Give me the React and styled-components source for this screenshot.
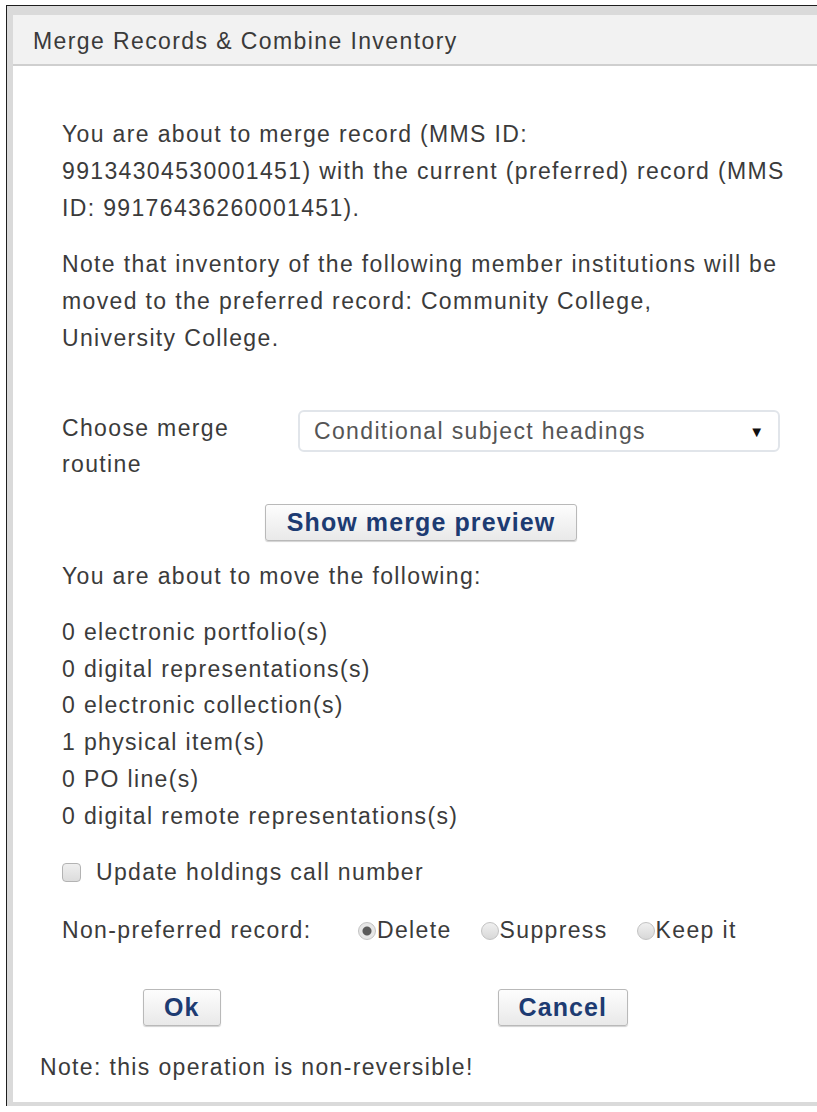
import React, { useState } from 'react';
import styled, { createGlobalStyle } from 'styled-components';

const GlobalStyle = createGlobalStyle`
  html, body {
    margin: 0;
    padding: 0;
    background: #ffffff;
  }
  body {
    font-family: "Liberation Sans", Arial, sans-serif;
    overflow: hidden;
  }
`;

const counts = [
  '0 electronic portfolio(s)',
  '0 digital representations(s)',
  '0 electronic collection(s)',
  '1 physical item(s)',
  '0 PO line(s)',
  '0 digital remote representations(s)',
];

const options = [
  { id: 'delete', label: 'Delete' },
  { id: 'suppress', label: 'Suppress' },
  { id: 'keep', label: 'Keep it' },
];

const App = () => {
  const [routine] = useState('Conditional subject headings');
  const [updateCallNumber, setUpdateCallNumber] = useState(false);
  const [nonPreferred, setNonPreferred] = useState('delete');

  return (
    <>
      <GlobalStyle />
      <Frame>
        <Header>Merge Records &amp; Combine Inventory</Header>
        <Body>
          <Para>
            You are about to merge record (MMS ID:
            <br />
            99134304530001451) with the current (preferred) record (MMS
            <br />
            ID: 99176436260001451).
          </Para>
          <Para $gap={19}>
            Note that inventory of the following member institutions will be
            <br />
            moved to the preferred record: Community College,
            <br />
            University College.
          </Para>

          <RoutineRow>
            <RoutineLabel>Choose merge routine</RoutineLabel>
            <SelectBox>
              <span>{routine}</span>
              <Arrow>▼</Arrow>
            </SelectBox>
          </RoutineRow>

          <PreviewRow>
            <Button $wide>Show merge preview</Button>
          </PreviewRow>

          <Para $gap={17}>You are about to move the following:</Para>
          <CountList>
            {counts.map((c) => (
              <li key={c}>{c}</li>
            ))}
          </CountList>

          <CheckRow onClick={() => setUpdateCallNumber((v) => !v)}>
            <Checkbox $checked={updateCallNumber} />
            Update holdings call number
          </CheckRow>

          <RadioRow>
            <RadioLabel>Non-preferred record:</RadioLabel>
            {options.map((o) => (
              <RadioOption key={o.id} onClick={() => setNonPreferred(o.id)}>
                <Radio $checked={nonPreferred === o.id} />
                {o.label}
              </RadioOption>
            ))}
          </RadioRow>

          <Actions>
            <Button>Ok</Button>
            <Button>Cancel</Button>
          </Actions>

          <Warning>Note: this operation is non-reversible!</Warning>
        </Body>
      </Frame>
    </>
  );
};

export default App;

const Frame = styled.div`
  margin: 5px 0 0 6px;
  border-top: 1px solid #1e1e1e;
  border-left: 1px solid #1e1e1e;
  background: #dadada;
  padding: 9px 0 4px 6px;
  height: 1101px;
  box-sizing: border-box;
  display: flex;
  flex-direction: column;
  color: #3b3b3b;
  font-size: 23px;
  letter-spacing: 1.35px;
`;

const Header = styled.div`
  height: 51px;
  flex-shrink: 0;
  display: flex;
  align-items: center;
  padding: 3px 0 0 20px;
  box-sizing: border-box;
  background: #f2f2f2;
  border-bottom: 2px solid #cfcfcf;
  color: #3a3a3a;
  letter-spacing: 1.4px;
`;

const Body = styled.div`
  flex: 1;
  background: #ffffff;
  padding: 50px 10px 0 49px;
  line-height: 37px;
`;

const Para = styled.p`
  margin: ${(p) => p.$gap || 0}px 0 0;
  white-space: nowrap;
`;

const RoutineRow = styled.div`
  display: flex;
  align-items: flex-start;
  margin-top: 53px;
  width: 718px;
`;

const RoutineLabel = styled.div`
  width: 236px;
  line-height: 36px;
`;

const SelectBox = styled.div`
  flex: 1;
  height: 42px;
  box-sizing: border-box;
  border: 2px solid #e1e5ea;
  border-radius: 6px;
  display: flex;
  align-items: center;
  justify-content: space-between;
  padding: 0 14px;
  color: #555555;
`;

const Arrow = styled.span`
  color: #111111;
  font-size: 15px;
  letter-spacing: 0;
`;

const PreviewRow = styled.div`
  display: flex;
  justify-content: center;
  width: 718px;
  margin-top: 22px;
`;

const Button = styled.button`
  font-family: "Liberation Sans", Arial, sans-serif;
  font-size: 25px;
  font-weight: bold;
  letter-spacing: 1.1px;
  color: #1d3b72;
  height: 37px;
  padding: 0 ${(p) => (p.$wide ? '21px' : '20px')};
  background: linear-gradient(#fdfdfd, #e9e9e9);
  border: 1px solid #b9b9b9;
  border-radius: 3px;
  box-shadow: 0 1px 1px rgba(0, 0, 0, 0.18);
  cursor: pointer;
  line-height: 1;
`;

const CountList = styled.ul`
  list-style: none;
  margin: 19px 0 0;
  padding: 0;
  line-height: 36.7px;
`;

const CheckRow = styled.label`
  display: flex;
  align-items: center;
  margin-top: 20px;
  cursor: pointer;
`;

const Checkbox = styled.span`
  width: 17px;
  height: 17px;
  border: 1px solid #b3b3b3;
  border-radius: 4px;
  background: ${(p) => (p.$checked ? '#9aa9c2' : 'linear-gradient(#efefef, #dcdcdc)')};
  margin-right: 15px;
  flex-shrink: 0;
`;

const RadioRow = styled.div`
  display: flex;
  align-items: center;
  margin-top: 21px;
`;

const RadioLabel = styled.span`
  width: 296px;
`;

const RadioOption = styled.label`
  display: flex;
  align-items: center;
  margin-right: 29px;
  cursor: pointer;
`;

const Radio = styled.span`
  width: 18px;
  height: 18px;
  border-radius: 50%;
  box-sizing: border-box;
  border: 1px solid #c2c2c2;
  background: ${(p) =>
    p.$checked
      ? 'radial-gradient(circle, #5a5a5a 0 4px, #e6e6e6 5px)'
      : 'linear-gradient(#f0f0f0, #d8d8d8)'};
  margin-right: 1px;
  flex-shrink: 0;
`;

const Actions = styled.div`
  display: flex;
  gap: 277px;
  margin: 40px 0 0 81px;
`;

const Warning = styled.p`
  margin: 23px 0 0 -22px;
`;
